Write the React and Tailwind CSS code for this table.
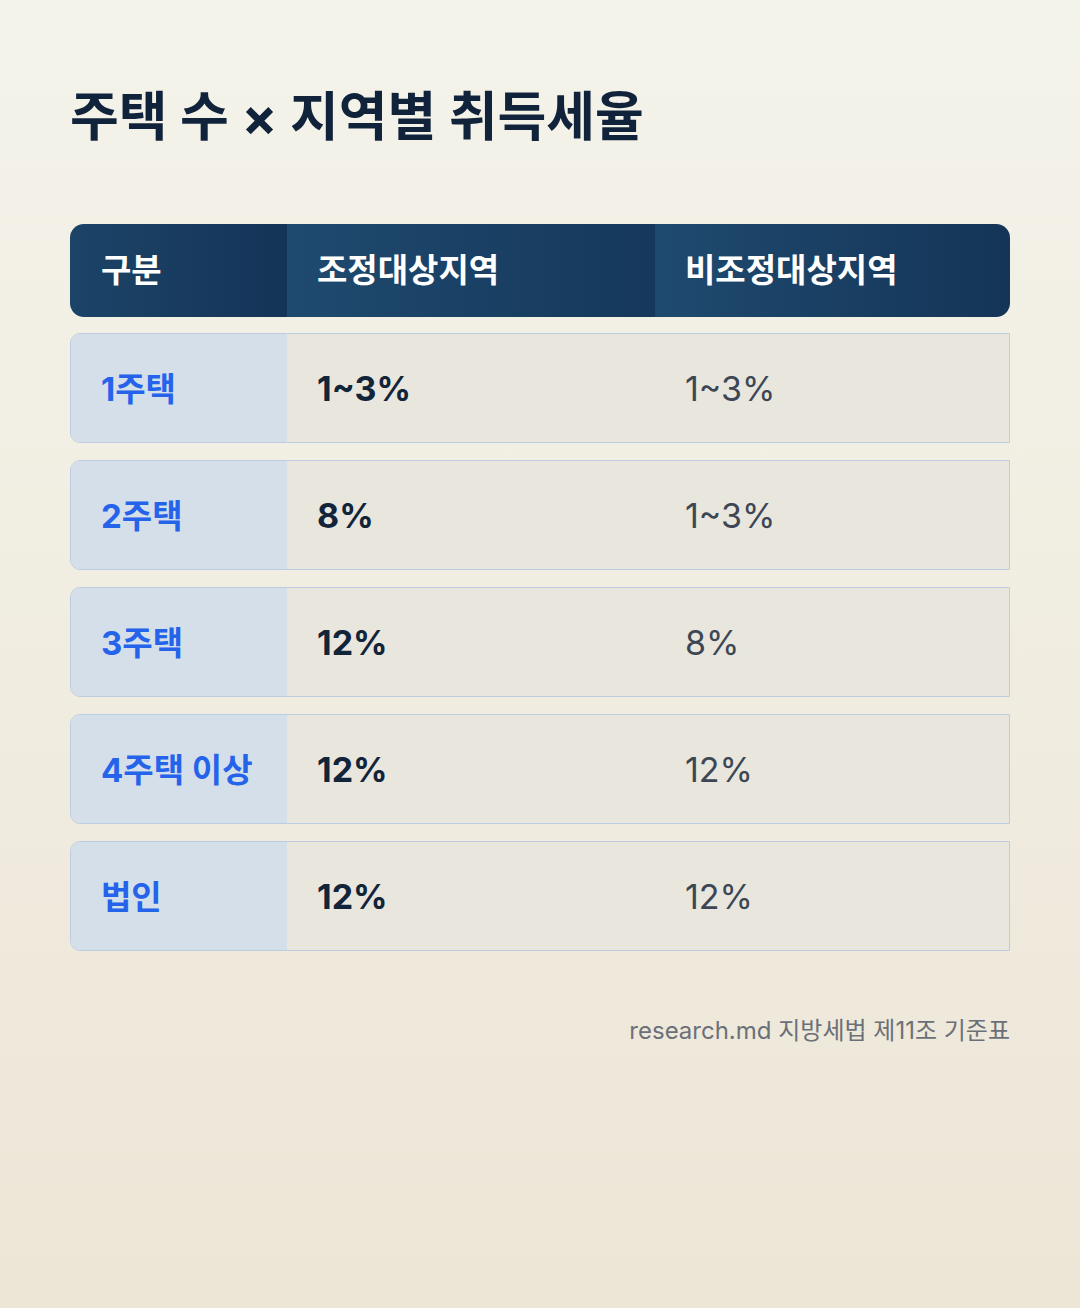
import React from "react";

const rows = [
  { label: "1주택", adj: "1~3%", nonAdj: "1~3%" },
  { label: "2주택", adj: "8%", nonAdj: "1~3%" },
  { label: "3주택", adj: "12%", nonAdj: "8%" },
  { label: "4주택 이상", adj: "12%", nonAdj: "12%" },
  { label: "법인", adj: "12%", nonAdj: "12%" },
];

const font = { fontFamily: 'Inter, "Noto Sans CJK KR", sans-serif' };

export default function App() {
  return (
    <div
      className="w-[1080px] h-[1308px] bg-gradient-to-b from-[#f4f3ea] to-[#ede6d7] px-[70px] pt-[84px]"
      style={font}
    >
      <h1 className="text-[53px] leading-[66px] font-bold text-[#10233a]">
        주택 수 × 지역별 취득세율
      </h1>

      <div className="mt-[74px] flex h-[93px] rounded-[14px] overflow-hidden text-white text-[33px] font-bold">
        <div className="w-[217px] flex items-center px-[31px] bg-gradient-to-r from-[#1c4468] to-[#143457]">구분</div>
        <div className="w-[368px] flex items-center px-[30px] bg-gradient-to-r from-[#1f4a6f] to-[#15385b]">조정대상지역</div>
        <div className="flex-1 flex items-center px-[30px] bg-gradient-to-r from-[#1f4a6f] to-[#143557]">비조정대상지역</div>
      </div>

      <div className="mt-[16px] flex flex-col gap-[17px]">
        {rows.map((r) => (
          <div
            key={r.label}
            className="flex h-[110px] border border-[#bccde2] rounded-l-[10px] overflow-hidden text-[34px]"
          >
            <div className="w-[216px] flex items-center pl-[30px] pt-[3px] whitespace-nowrap bg-[#d4dfea] text-[#2563eb] text-[33px] font-bold">
              {r.label}
            </div>
            <div className="w-[368px] flex items-center px-[30px] bg-[#e8e6dd] text-[#12243a] font-bold">
              {r.adj}
            </div>
            <div className="flex-1 flex items-center px-[30px] bg-[#e8e6dd] text-[#3d4654]">
              {r.nonAdj}
            </div>
          </div>
        ))}
      </div>

      <p className="mt-[62px] text-right text-[24px] text-[#6b7078]">research.md 지방세법 제11조 기준표</p>
    </div>
  );
}
